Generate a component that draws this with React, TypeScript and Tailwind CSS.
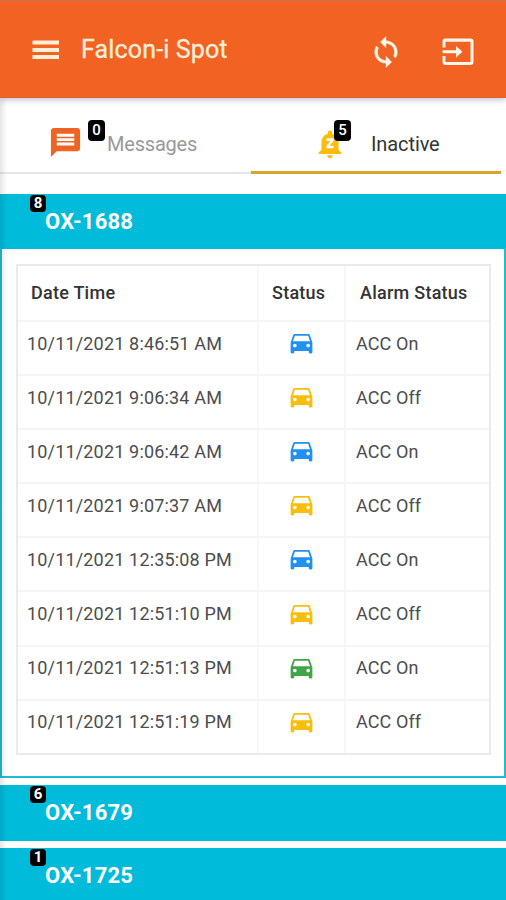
import React, { useState } from 'react';
import {
  MdDirectionsCar,
  MdMessage,
  MdNotificationsPaused,
} from 'react-icons/md';

const CAR_COLORS = {
  blue: 'text-[#2090f2]',
  yellow: 'text-[#f9bd0c]',
  green: 'text-[#41a548]',
} as const;

interface AlarmRow {
  time: string;
  car: keyof typeof CAR_COLORS;
  alarm: string;
}

interface Vehicle {
  name: string;
  count: number;
  rows: AlarmRow[];
}

const VEHICLES: Vehicle[] = [
  {
    name: 'OX-1688',
    count: 8,
    rows: [
      { time: '10/11/2021 8:46:51 AM', car: 'blue', alarm: 'ACC On' },
      { time: '10/11/2021 9:06:34 AM', car: 'yellow', alarm: 'ACC Off' },
      { time: '10/11/2021 9:06:42 AM', car: 'blue', alarm: 'ACC On' },
      { time: '10/11/2021 9:07:37 AM', car: 'yellow', alarm: 'ACC Off' },
      { time: '10/11/2021 12:35:08 PM', car: 'blue', alarm: 'ACC On' },
      { time: '10/11/2021 12:51:10 PM', car: 'yellow', alarm: 'ACC Off' },
      { time: '10/11/2021 12:51:13 PM', car: 'green', alarm: 'ACC On' },
      { time: '10/11/2021 12:51:19 PM', car: 'yellow', alarm: 'ACC Off' },
    ],
  },
  { name: 'OX-1679', count: 6, rows: [] },
  { name: 'OX-1725', count: 1, rows: [] },
];

const MenuIcon: React.FC = () => (
  <svg className="w-[36px] h-[36px]" viewBox="0 0 36 36" fill="currentColor">
    <path d="M4.5 8.5h26.5v4h-26.5zM4.5 16h26.5v4h-26.5zM4.5 23h26.5v4h-26.5z" />
  </svg>
);

const SyncIcon: React.FC = () => (
  <svg className="w-[34px] h-[34px]" viewBox="0 0 24 24" fill="currentColor" stroke="currentColor" strokeWidth="0.25">
    <path d="M12 4V1L8 5l4 4V6c3.31 0 6 2.69 6 6 0 1.01-.25 1.97-.7 2.8l1.46 1.46C19.54 15.03 20 13.57 20 12c0-4.42-3.58-8-8-8zm0 14c-3.31 0-6-2.69-6-6 0-1.01.25-1.97.7-2.8L5.24 7.74C4.46 8.97 4 10.43 4 12c0 4.42 3.58 8 8 8v3l4-4-4-4v3z" />
  </svg>
);

const InputIcon: React.FC = () => (
  <svg className="w-[36px] h-[36px]" viewBox="0 0 36 36" fill="currentColor">
    <path d="M4.5 4.5H29.5a3 3 0 0 1 3 3V28a3 3 0 0 1-3 3H4.500a3 3 0 0 1-3-3V22H4.500V28H29.500V7.700H4.500V13.500H1.500V7.500a3 3 0 0 1 3-3z" />
    <path d="M1.500 16.200H15V12L21.500 17.700L15 23.500V19.300H1.500z" />
  </svg>
);

const AlarmTable: React.FC<{ rows: AlarmRow[] }> = ({ rows }) => (
  <div className="border-2 border-t-0 border-[#22bcd2] bg-white pt-[15px] pb-[21px] pl-[14px] pr-[13px]">
    <div className="border-2 border-[#eaeaea] text-[18px] text-[#4d4d4d]">
      <div className="grid grid-cols-[241px_87px_1fr] h-[54px] font-medium text-[#333] tracking-[0.25px]">
        <div className="flex items-center pl-[13px] pb-px border-r-2 border-[#f6f6f6]">Date Time</div>
        <div className="flex items-center pl-[13px] pb-px border-r-2 border-[#f6f6f6]">Status</div>
        <div className="flex items-center pl-[14px] pb-px">Alarm Status</div>
      </div>
      {rows.map((row) => (
        <div
          key={row.time}
          className="grid grid-cols-[241px_87px_1fr] h-[54.1px] border-t-2 border-[#f5f5f5]"
        >
          <div className="flex items-center pl-[9px] pb-[10px] border-r-2 border-[#f6f6f6] tracking-[0.17px]">
            {row.time}
          </div>
          <div className="flex items-center justify-center pr-px pb-[11px] border-r-2 border-[#f6f6f6]">
            <MdDirectionsCar className={`w-[29px] h-[29px] ${CAR_COLORS[row.car]}`} />
          </div>
          <div className="flex items-center pl-[10px] pb-[10px] tracking-[0.1px]">{row.alarm}</div>
        </div>
      ))}
    </div>
  </div>
);

const App: React.FC = () => {
  const [openVehicle, setOpenVehicle] = useState('OX-1688');

  return (
    <div className="relative w-[506px] h-[900px] overflow-hidden bg-white font-['Roboto',sans-serif]">
      {/* Header */}
      <header className="relative flex items-center h-[98px] border-t-2 border-b border-t-[#d96b3e] border-b-[#dc6030] bg-[#f16223] pl-[28px] pr-[29px] text-[#ffeed8] shadow-[0_2px_6px_rgba(60,50,80,0.3)]">
        <MenuIcon />
        <h1 className="ml-[17px] text-[25px] leading-[30px] tracking-[0.15px] [-webkit-text-stroke:0.3px_currentColor]">
          Falcon-i Spot
        </h1>
        <div className="ml-auto flex items-center gap-[38px] pt-[5px] text-[#fff6ea]">
          <SyncIcon />
          <InputIcon />
        </div>
      </header>

      {/* Tabs */}
      <nav className="flex h-[76px] pr-[5px] text-[20px]">
        <button className="relative flex items-center w-[251px] pl-[48px] pt-[15px] border-b-2 border-[#e6e6e6] text-[#999]">
          <MdMessage className="w-[35px] h-[35px] text-[#ed6424]" />
          <span className="ml-[24px] pt-[3px] tracking-[-0.2px]">Messages</span>
          <span className="absolute left-[88px] top-[22px] w-[17px] h-[21px] rounded-[4px] bg-black text-center text-[15px] leading-[21px] font-medium text-white">
            0
          </span>
        </button>
        <button className="relative flex items-center flex-1 pl-[62px] pt-[18px] border-b-[3px] border-[#dba32d] text-[#333]">
          <MdNotificationsPaused className="w-[34px] h-[34px] text-[#fbbc0c]" />
          <span className="ml-[24px] pt-px tracking-[-0.1px]">Inactive</span>
          <span className="absolute left-[83px] top-[22px] w-[17px] h-[21px] rounded-[4px] bg-black text-center text-[15px] leading-[21px] font-medium text-white">
            5
          </span>
        </button>
      </nav>

      {/* Vehicles */}
      <main className="flex flex-col gap-[7px] pt-[20px]">
        {VEHICLES.map((vehicle) => (
          <section key={vehicle.name}>
            <button
              className={`relative flex items-center w-full bg-[#00bbda] pl-[45px] text-left text-[22px] font-bold tracking-[0.2px] text-white ${
                vehicle.name === openVehicle ? 'h-[55px]' : 'h-[56px]'
              }`}
              onClick={() => setOpenVehicle(vehicle.name)}
            >
              {vehicle.name}
              <span className="absolute left-[30px] top-[1px] w-[16px] h-[17px] rounded-[4px] bg-black text-center text-[15px] leading-[17px] tracking-normal">
                {vehicle.count}
              </span>
            </button>
            {vehicle.name === openVehicle && <AlarmTable rows={vehicle.rows} />}
          </section>
        ))}
      </main>

      {/* Soft shade along the left edge */}
      <div className="absolute left-0 top-[98px] bottom-0 w-[7px] bg-gradient-to-r from-black/10 to-transparent pointer-events-none" />
    </div>
  );
};

export default App;
